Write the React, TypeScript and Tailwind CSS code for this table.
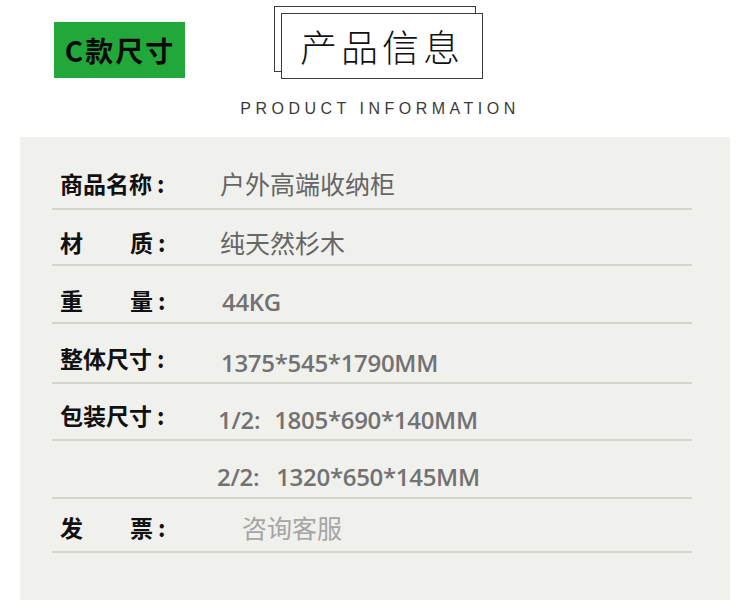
import React from "react";

type Row = {
  label: string[];
  prefix?: string;
  prefixCls?: string;
  value: string;
  kind: "cjk" | "num" | "muted";
  rowCls: string;
  valCls: string;
};

const rows: Row[] = [
  { label: ["商品名称"], value: "户外高端收纳柜", kind: "cjk", rowCls: "h-[73px] pt-[22px]", valCls: "" },
  { label: ["材", "质"], value: "纯天然杉木", kind: "cjk", rowCls: "h-[56px] pt-[10px]", valCls: "" },
  { label: ["重", "量"], value: "44KG", kind: "num", rowCls: "h-[58px] pt-[12px]", valCls: "pt-[4px] pl-[2px]" },
  { label: ["整体尺寸"], value: "1375*545*1790MM", kind: "num", rowCls: "h-[60px] pt-[10px]", valCls: "pt-[10px] pl-[1px]" },
  { label: ["包装尺寸"], prefix: "1/2:", prefixCls: "mr-[14px]", value: "1805*690*140MM", kind: "num", rowCls: "h-[57px] pt-[7px]", valCls: "pt-[10px] -ml-[2px]" },
  { label: [], prefix: "2/2:", prefixCls: "mr-[17px]", value: "1320*650*145MM", kind: "num", rowCls: "h-[58px] pt-[5px]", valCls: "pt-[10px] -ml-[3px]" },
  { label: ["发", "票"], value: "咨询客服", kind: "muted", rowCls: "h-[54px] pt-[5px]", valCls: "pl-[22px]" },
];

function Label({ parts }: { parts: string[] }) {
  if (parts.length === 0) return <div className="w-[160px] shrink-0" />;
  return (
    <div className="w-[160px] shrink-0 flex items-center font-['Noto_Sans_CJK_SC',sans-serif] font-bold text-[23px] leading-none text-[#111]">
      {parts.length === 1 ? (
        <span>{parts[0]}</span>
      ) : (
        <div className="w-[93px] flex justify-between">
          <span>{parts[0]}</span>
          <span>{parts[1]}</span>
        </div>
      )}
      <span className="ml-[5px]">:</span>
    </div>
  );
}

export default function App() {
  return (
    <div className="w-[750px] h-[609px] bg-white overflow-hidden">
      {/* header */}
      <div className="flex items-start pt-[6px] pl-[54px]">
        <div className="mt-[16px] w-[131px] h-[56px] bg-[#22a83a] flex items-center justify-center font-['Noto_Sans_CJK_SC',sans-serif] font-bold text-[28px] leading-none text-[#0a0a0a] tracking-[2px] pl-[1px]">
          C款尺寸
        </div>
        <div className="ml-[89px] relative pl-[7px] pt-[7px]">
          <div className="absolute left-0 top-0 w-[202px] h-[66px] border border-[#3a3a3a]" />
          <div className="relative w-[202px] h-[66px] bg-white border border-[#3a3a3a] flex items-center justify-center font-['Noto_Sans_CJK_SC',sans-serif] font-light text-[37px] leading-none text-[#111] tracking-[4px]">
            产品信息
          </div>
        </div>
      </div>
      <div className="mt-[22px] text-center font-['Liberation_Sans',Arial,sans-serif] text-[16px] leading-[16px] tracking-[4.5px] text-[#3a3a3a] pl-[10px]">
        PRODUCT INFORMATION
      </div>

      {/* panel */}
      <div className="mt-[20px] mx-[20px] h-[463px] bg-[#f0f0ed] pl-[32px] pr-[38px]">
        {rows.map((r, i) => (
          <div key={i} className={`flex items-center border-b-2 border-[#d5d5d0] pl-[8px] ${r.rowCls}`}>
            <Label parts={r.label} />
            {r.kind === "cjk" && (
              <span className={`font-['Noto_Sans_CJK_SC',sans-serif] text-[25px] leading-none text-[#666] ${r.valCls}`}>
                {r.value}
              </span>
            )}
            {r.kind === "muted" && (
              <span className={`font-['Noto_Sans_CJK_SC',sans-serif] text-[25px] leading-none text-[#a5a5a3] ${r.valCls}`}>
                {r.value}
              </span>
            )}
            {r.kind === "num" && (
              <span className={`flex font-['Open_Sans','Noto_Sans_CJK_SC',sans-serif] font-semibold text-[24px] leading-none tracking-[-0.3px] text-[#727272] ${r.valCls}`}>
                {r.prefix && <span className={r.prefixCls}>{r.prefix}</span>}
                <span>{r.value}</span>
              </span>
            )}
          </div>
        ))}
      </div>
    </div>
  );
}
